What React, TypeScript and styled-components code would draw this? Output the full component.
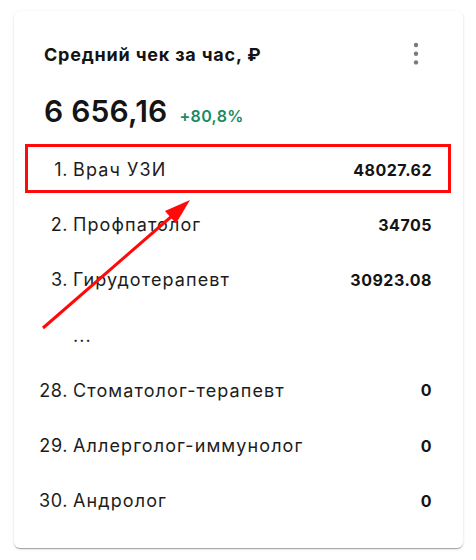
import React from "react";
import styled, { createGlobalStyle } from "styled-components";

const Global = createGlobalStyle`
  html, body { margin: 0; padding: 0; background: #ffffff; }
  body { font-family: Inter, "Noto Sans", sans-serif; color: #1c1c1c; }
`;

const Page = styled.div`
  position: relative;
  width: 476px;
  height: 560px;
  padding: 11px 13px 0 14px;
  box-sizing: border-box;
`;

const Card = styled.div`
  width: 449px;
  height: 537px;
  box-sizing: border-box;
  background: #fff;
  border-radius: 6px;
  box-shadow: 0 2px 1px -1px rgba(0,0,0,0.2), 0 1px 1px 0 rgba(0,0,0,0.14), 0 1px 3px 0 rgba(0,0,0,0.12);
  padding: 31px 0 0 0;
  display: flex;
  flex-direction: column;
`;

const Header = styled.div`
  display: flex;
  align-items: center;
  justify-content: space-between;
  padding: 0 27px 0 30px;
  height: 26px;
`;

const Title = styled.h2`
  margin: 0;
  font-size: 18px;
  font-weight: 700;
  line-height: 26px;
  letter-spacing: 0.8px;
  color: #141414;
`;

const MenuButton = styled.button`
  width: 40px;
  height: 40px;
  margin-top: -2px;
  border: none;
  background: transparent;
  padding: 0;
  display: flex;
  align-items: center;
  justify-content: center;
  color: #7a7a7a;
`;

const Summary = styled.div`
  display: flex;
  align-items: baseline;
  gap: 12px;
  padding: 0 30px;
  margin-top: 23px;
  height: 40px;
`;

const BigValue = styled.span`
  font-size: 30px;
  font-weight: 600;
  line-height: 40px;
  color: #141414;
  letter-spacing: 0.2px;
`;

const Delta = styled.span`
  font-size: 16px;
  font-weight: 600;
  letter-spacing: 0.35px;
  color: #188a64;
`;

const List = styled.ol`
  list-style: none;
  margin: 11px 0 0 0;
  padding: 0 11px;
`;

const Row = styled.li`
  position: relative;
  height: 55.2px;
  display: grid;
  grid-template-columns: 40px 1fr auto;
  column-gap: 5px;
  align-items: center;
  padding: 0 20px 0 3px;
`;

const Num = styled.span`
  text-align: right;
  font-size: 18px;
  letter-spacing: 0.6px;
  color: #1c1c1c;
`;

const Label = styled.span`
  font-size: 18px;
  letter-spacing: 1.1px;
  color: #1c1c1c;
`;

const Value = styled.span`
  font-size: 16px;
  font-weight: 700;
  letter-spacing: 0.5px;
  color: #141414;
`;

const Highlight = styled.div`
  position: absolute;
  left: 0;
  right: 1px;
  top: 2px;
  bottom: 4px;
  border: 3px solid #ff0a0a;
  pointer-events: none;
`;

const ArrowLayer = styled.svg`
  position: absolute;
  left: 0;
  top: 0;
  pointer-events: none;
`;

const rows = [
  { n: "1.", label: "Врач УЗИ", value: "48027.62", hl: true },
  { n: "2.", label: "Профпатолог", value: "34705" },
  { n: "3.", label: "Гирудотерапевт", value: "30923.08" },
  { n: "", label: "...", value: "" },
  { n: "28.", label: "Стоматолог-терапевт", value: "0" },
  { n: "29.", label: "Аллерголог-иммунолог", value: "0" },
  { n: "30.", label: "Андролог", value: "0" },
];

export default function App() {
  return (
    <>
      <Global />
      <Page>
        <Card>
          <Header>
            <Title>Средний чек за час, ₽</Title>
            <MenuButton aria-label="menu">
              <svg width="8" height="26" viewBox="0 0 8 26">
                <circle cx="4" cy="4" r="2.2" fill="currentColor" />
                <circle cx="4" cy="12.7" r="2.2" fill="currentColor" />
                <circle cx="4" cy="21.4" r="2.2" fill="currentColor" />
              </svg>
            </MenuButton>
          </Header>
          <Summary>
            <BigValue>6 656,16</BigValue>
            <Delta>+80,8%</Delta>
          </Summary>
          <List>
            {rows.map((r, i) => (
              <Row key={i}>
                <Num>{r.n}</Num>
                <Label>{r.label}</Label>
                <Value>{r.value}</Value>
                {r.hl && <Highlight />}
              </Row>
            ))}
          </List>
        </Card>
        <ArrowLayer width="476" height="560" viewBox="0 0 476 560">
          <line x1="43" y1="328" x2="172" y2="216" stroke="#ff0a0a" strokeWidth="3" />
          <polygon points="190,200 176,223.5 165,211" fill="#ff0a0a" />
        </ArrowLayer>
      </Page>
    </>
  );
}
